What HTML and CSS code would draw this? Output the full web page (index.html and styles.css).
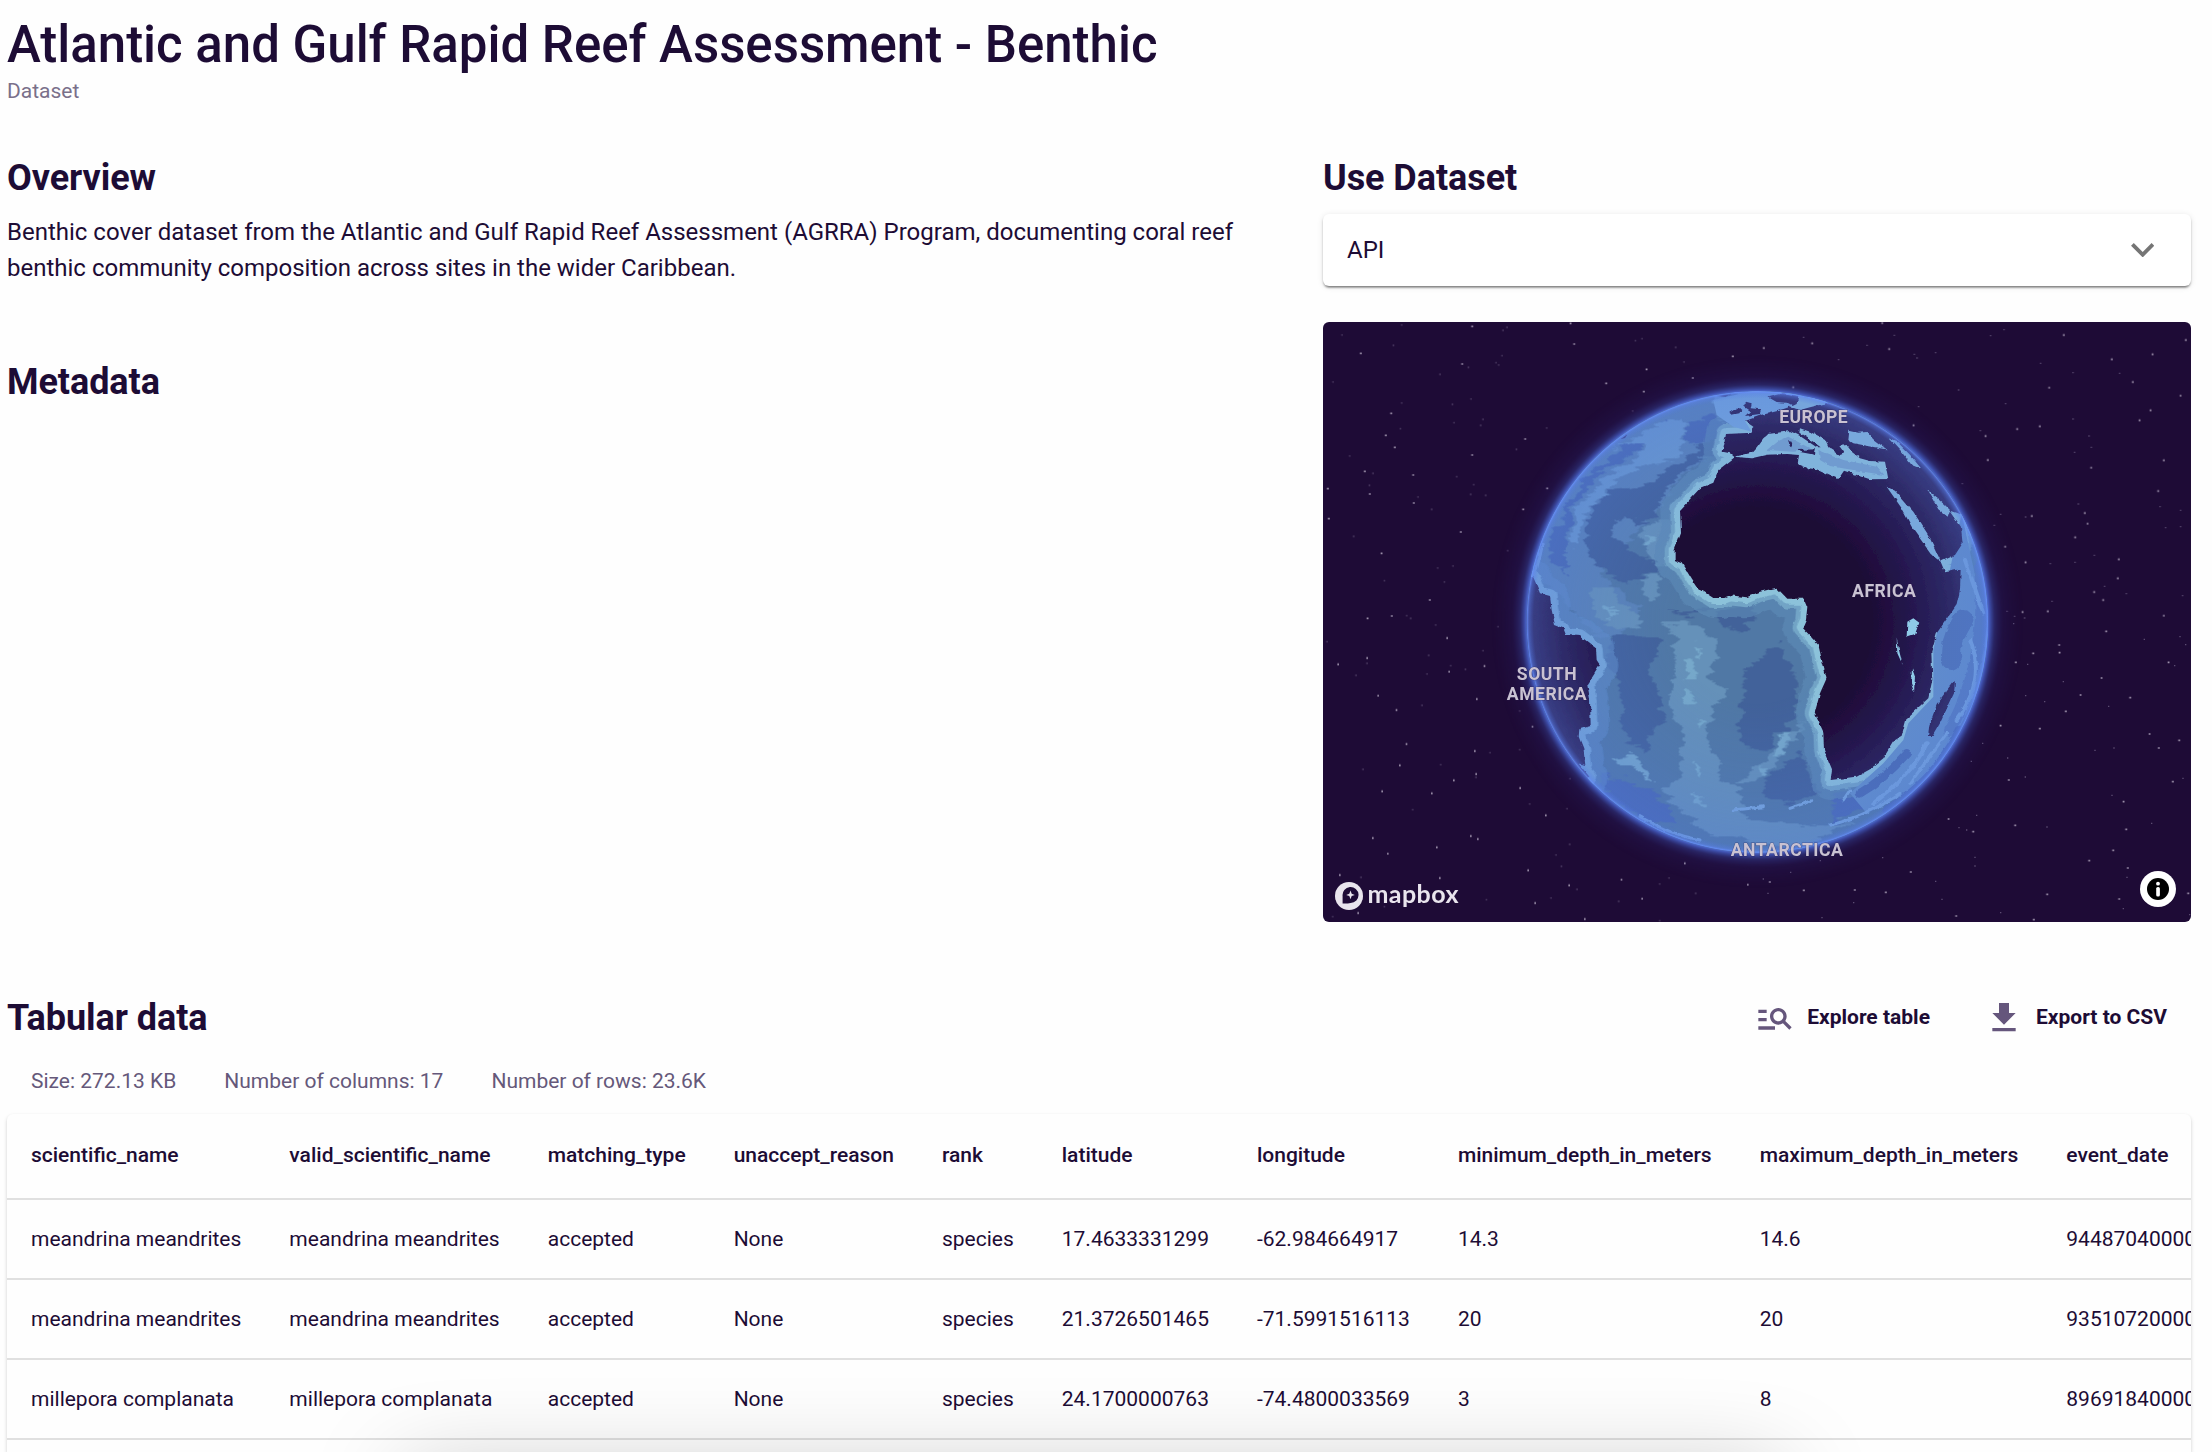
FILE: index.html
```html
<!DOCTYPE html>
<html lang="en">
<head>
<meta charset="utf-8">
<title>Atlantic and Gulf Rapid Reef Assessment - Benthic</title>
<link rel="stylesheet" href="styles.css">
</head>
<body>
<main class="page">
  <header class="page-header">
    <h1 class="title">Atlantic and Gulf Rapid Reef Assessment - Benthic</h1>
    <p class="kind">Dataset</p>
  </header>

  <div class="columns">
    <div class="info">
      <section>
        <h2 class="heading">Overview</h2>
        <p class="overview-text">Benthic cover dataset from the Atlantic and Gulf Rapid Reef Assessment (AGRRA) Program, documenting coral reef benthic community composition across sites in the wider Caribbean.</p>
      </section>
      <section>
        <h2 class="heading">Metadata</h2>
      </section>
    </div>

    <div class="side">
      <section>
        <h2 class="heading">Use Dataset</h2>
        <div class="panel">
          <span>API</span>
          <svg class="chevron" viewBox="6 8.59 12 7.41"><path d="M16.59 8.59 12 13.17 7.41 8.59 6 10l6 6 6-6z"/></svg>
        </div>
      </section>

      <div class="map">
        <svg class="map-canvas" viewBox="0 0 868 600">
          <defs>
            <radialGradient id="glow" gradientUnits="userSpaceOnUse" cx="772" cy="786" r="800">
              <stop offset=".86" stop-color="#5d82f5"/>
              <stop offset=".872" stop-color="#4a68d4" stop-opacity=".75"/>
              <stop offset=".89" stop-color="#3c50b0" stop-opacity=".38"/>
              <stop offset=".92" stop-color="#31318a" stop-opacity=".15"/>
              <stop offset="1" stop-color="#2a1a60" stop-opacity="0"/>
            </radialGradient>
            <radialGradient id="land" gradientUnits="userSpaceOnUse" cx="772" cy="786" r="692">
              <stop offset=".5" stop-color="#1e0b36"/>
              <stop offset=".68" stop-color="#251850"/>
              <stop offset=".85" stop-color="#2e2b69"/>
              <stop offset="1" stop-color="#3a4189"/>
            </radialGradient>
            <radialGradient id="haze" gradientUnits="userSpaceOnUse" cx="772" cy="786" r="692">
              <stop offset=".35" stop-color="#5078e0" stop-opacity="0"/>
              <stop offset=".75" stop-color="#5078e0" stop-opacity=".18"/>
              <stop offset="1" stop-color="#5078e0" stop-opacity=".34"/>
            </radialGradient>
            <radialGradient id="rim" gradientUnits="userSpaceOnUse" cx="772" cy="786" r="692">
              <stop offset=".97" stop-color="#5078e0" stop-opacity="0"/>
              <stop offset=".99" stop-color="#5b80ea" stop-opacity=".4"/>
              <stop offset="1" stop-color="#6a92ff" stop-opacity=".9"/>
            </radialGradient>
            <clipPath id="disc"><circle cx="772" cy="786" r="692"/></clipPath>
            <filter id="ragged" x="-10%" y="-10%" width="120%" height="120%">
              <feTurbulence type="fractalNoise" baseFrequency=".012 .06" numOctaves="3" seed="4"/>
              <feDisplacementMap in="SourceGraphic" scale="50" xChannelSelector="R" yChannelSelector="B"/>
            </filter>
            <filter id="coast" x="-5%" y="-5%" width="110%" height="110%">
              <feTurbulence type="fractalNoise" baseFrequency=".05" numOctaves="2" seed="9"/>
              <feDisplacementMap in="SourceGraphic" scale="12" xChannelSelector="R" yChannelSelector="G"/>
            </filter>
            <path id="continent" d="M704 292 655 330 640 368 600 385 540 450 543 520 524 570 524 600 548 610 575 655 595 685 640 714 670 714 690 706 740 712 780 695 830 683 862 716 912 716 922 740 918 780 908 803 955 855 968 910 980 955 960 1000 944 1060 970 1115 972 1170 996 1228 992 1260 1070 1250 1110 1228 1150 1195 1180 1145 1205 1130 1220 1075 1285 1015 1297 960 1294 875 1310 820 1370 735 1380 690 1382 628 1335 637 1322 605 1365 585 1388 550 1383 500 1350 452 1378 462 1500 480 1500 60 1000 60 985 128 930 138 900 150 870 140 835 152 785 165 735 183 760 200 755 218 678 222 668 275 690 280Z"/>
            <path id="south-america" d="M60 650 100 652 120 700 150 708 155 750 165 795 190 805 198 825 240 828 288 865 290 900 300 915 262 975 270 1020 272 1098 238 1108 236 1130 250 1165 256 1215 235 1210 268 1250 200 1350 0 1200 0 700Z"/>
          </defs>

          <g transform="scale(.333333)" stroke="#d9d0e2" stroke-width="5" fill="none" opacity=".75">
            <path d="M445 13h5M751 66h5M111 94h5M415 126h5M968 142h5M960 209h5M202 274h5M186 340h5M213 376h5M445 399h5M268 459h5M138 516h5M270 543h5M598 562h5M411 630h5M670 499h5M173 694h5M15 590h5M12 500h5M318 834h5M604 351h5M123 448h5M847 184h5M1107 168h5M131 889h5M204 882h5M740 4h5M1227 103h5"/>
            <path transform="translate(1302 0)" d="M373 3h5M394 81h5M163 64h5M18 78h5M918 39h5M1284 54h5M1184 97h5M1062 112h5M1125 180h5M874 197h5M1145 295h5M1178 265h5M778 321h5M846 313h5M690 414h5M683 342h5M1000 437h5M1218 415h5M822 582h5M981 573h5M989 605h5M952 646h5M742 674h5M803 721h5M1083 712h5M1080 769h5M1009 810h5M1036 834h5M870 868h5M794 870h5M106 196h5M1218 881h5M467 310h5M1268 221h5M1201 507h5"/>
            <path transform="translate(0 900)" d="M370 48h5M130 108h5M43 127h5M376 149h5M482 132h5M459 231h5M218 264h5M248 366h5M228 430h5M453 387h5M457 456h5M390 475h5M175 508h5M324 514h5M589 498h5M666 580h5M441 642h5M462 651h5M147 648h5M339 676h5M192 695h5M613 745h5M736 790h5M893 773h5M955 830h5M634 843h5M783 891h5M348 768h5M48 759h5M103 873h5M1083 724h5M1272 788h5M163 221h5M626 314h5"/>
            <path transform="translate(1302 900)" d="M1045 28h5M904 69h5M905 92h5M826 94h5M774 121h5M1031 168h5M968 219h5M1117 227h5M924 268h5M846 320h5M728 311h5M1175 336h5M1203 378h5M1264 355h5M1245 479h5M753 474h5M1097 539h5M572 591h5M646 629h5M772 610h5M1066 685h5M1110 738h5M994 716h5M459 750h5M291 804h5M384 811h5M36 780h5M595 882h5M868 817h5M1084 831h5M138 805h5M1291 814h5M828 893h5M1232 121h5M1105 622h5"/>
          </g>
          <g transform="scale(.333333)" stroke="#9a8fae" stroke-width="4" fill="none" opacity=".5">
            <path d="M234 9h4M538 25h4M550 16h4M535 101h4M349 157h4M517 122h4M525 129h4M434 136h4M209 70h4M386 247h4M442 231h4M234 243h4M391 302h4M478 292h4M471 310h4M230 320h4M78 402h4M148 454h4M137 490h4M578 382h4M669 318h4M450 488h4M441 517h4M486 520h4M283 525h4M399 464h4M324 562h4M90 643h4M342 738h4M388 732h4M362 780h4M182 776h4M249 881h4M261 889h4M935 56h4M955 50h4M1056 76h4M1081 120h4M927 267h4M28 180h4M55 39h4M552 686h4"/>
            <path transform="translate(1302 0)" d="M328 70h4M410 40h4M470 97h4M478 108h4M534 92h4M243 113h4M138 46h4M699 41h4M739 23h4M849 124h4M946 152h4M1086 154h4M603 204h4M744 245h4M483 254h4M946 291h4M994 342h4M668 326h4M951 391h4M1001 376h4M614 485h4M962 546h4M1207 554h4M1269 565h4M1224 617h4M1269 614h4M729 577h4M710 610h4M804 585h4M1010 700h4M952 721h4M878 725h4M1106 815h4M1041 793h4M1275 821h4M748 868h4M771 883h4M801 888h4M883 838h4"/>
            <path transform="translate(0 900)" d="M336 9h4M523 14h4M10 59h4M315 100h4M478 86h4M310 156h4M130 124h4M97 160h4M381 131h4M425 142h4M295 250h4M588 267h4M588 383h4M499 392h4M118 442h4M351 428h4M457 466h4M739 470h4M618 546h4M730 560h4M267 563h4M738 667h4M697 699h4M713 733h4M682 828h4M760 802h4M488 833h4M1008 786h4M1036 768h4M1116 814h4M1008 896h4M885 838h4M112 766h4M182 854h4M27 884h4"/>
            <path transform="translate(1302 900)" d="M768 5h4M1160 52h4M1267 44h4M1284 68h4M1251 131h4M810 127h4M917 179h4M804 221h4M861 239h4M1053 253h4M675 364h4M750 408h4M803 465h4M1069 378h4M1012 385h4M1276 469h4M1182 604h4M657 580h4M604 617h4M627 624h4M868 615h4M652 706h4M652 732h4M375 707h4M99 751h4M534 778h4M188 716h4M288 842h4M193 887h4M1108 766h4M1097 860h4M729 872h4M553 832h4M641 418h4M17 771h4M31 814h4M1063 520h4M1296 878h4"/>
          </g>

          <g transform="translate(177 38) scale(.333333)">
            <circle cx="772" cy="786" r="800" fill="url(#glow)"/>
            <g clip-path="url(#disc)">
              <circle cx="772" cy="786" r="695" fill="#5078a5"/>
              <g filter="url(#ragged)">
                <path fill="#5a83b6" d="M60 500 300 180 660 90 760 200 680 270 560 330 480 440 300 640 420 740 360 830 280 820 170 700 80 640Z"/>
                <path fill="#43629a" d="M640 230 560 290 500 330 430 380 310 400 260 480 258 560 290 625 370 662 440 655 480 640 465 600 410 590 370 540 335 530 345 480 385 470 400 490 455 480 490 400 560 320 660 280Z"/>
                <path fill="#486ab0" d="M150 530 250 360 400 240 500 180 520 210 440 260 300 340 220 440 190 560 200 640 150 600ZM560 190 640 170 700 200 660 240 560 250Z"/>
                <path fill="#43629a" d="M340 825 475 820 480 850 450 930 475 1000 500 1080 450 1120 440 1175 380 1140 350 1100 375 1060 350 960 320 900Z"/>
                <path fill="#43629a" d="M835 850 885 940 890 1060 830 1120 800 1170 740 1165 715 1120 730 1020 730 940 790 890ZM640 765 750 730 765 770 720 820 670 800ZM480 750 560 755 640 750 560 768ZM900 1180 940 1260 950 1300 850 1330 780 1300 820 1240Z"/>
                <path fill="#4a69b2" d="M290 1240 400 1270 500 1330 530 1400 420 1370 330 1310ZM1000 1300 1120 1260 1210 1180 1260 1190 1180 1300 1000 1390Z"/>
                <path fill="#6591b9" d="M270 680 340 680 350 730 430 770 420 800 350 810 285 770ZM430 660 475 650 480 700 450 730 425 690ZM480 790 555 785 600 800 645 850 650 900 625 960 695 990 640 1040 620 1120 655 1200 660 1260 720 1290 730 1370 900 1400 1060 1380 900 1470 620 1420 480 1290 540 1250 550 1100 510 1050 520 900 530 830Z"/>
                <path fill="#6591b9" d="M415 530 440 500 530 470 540 620 470 610ZM920 1080 860 1110 820 1170 740 1250 700 1280 800 1250 880 1140Z"/>
                <path fill="#6b99cc" d="M640 110 760 95 820 150 770 190 660 180 640 150ZM330 270 480 190 540 170 560 210 530 290 450 310 360 350 300 410 250 470 225 560 205 540 230 450 320 350 450 260 400 250Z"/>
                <path fill="#76a8ca" d="M550 900 575 890 590 950 560 960ZM560 980 580 1000 585 1040 560 1030ZM590 1070 610 1080 605 1110ZM585 1200 605 1220 595 1260ZM580 850 600 870 595 890ZM570 1290 620 1330 600 1345ZM310 740 345 750 340 780ZM420 560 440 535 465 545ZM845 1120 870 1115 850 1180 820 1190ZM780 1220 810 1225 800 1250ZM340 1190 400 1180 440 1230 460 1260 410 1230 360 1220Z"/>
              </g>
              <g fill="none" stroke-linejoin="round" filter="url(#coast)">
                <use href="#continent" stroke="#5d8bb5" stroke-width="120" opacity=".65"/>
                <use href="#south-america" stroke="#5f8dc6" stroke-width="110" opacity=".6"/>
                <use href="#south-america" stroke="#78a9d8" stroke-width="40"/>
                <use href="#continent" stroke="#72a4c6" stroke-width="60"/>
                <use href="#continent" stroke="#8cc2da" stroke-width="36"/>
              </g>
              <path fill="#76a8dc" d="M640 120 760 92 900 100 900 150 780 168 735 183 755 215 700 200 650 165Z"/>
              <path fill="#6390c8" d="M1385 460 1300 870 1300 1010 1225 1090 1210 1140 1150 1210 1050 1300 1100 1360 1300 1260 1480 900Z"/>
              <g filter="url(#coast)" fill="none" stroke-linecap="round">
                <path stroke="#4f73b4" stroke-width="60" d="M1390 780Q1345 850 1355 900"/>
                <path stroke="#567cbd" stroke-width="36" d="M1440 620Q1465 900 1350 1110"/>
                <path stroke="#76a5dc" stroke-width="12" d="M1410 840Q1460 960 1370 1080M1395 600Q1430 700 1450 760M1280 1150Q1240 1240 1120 1330"/>
                <path stroke="#4a6bb0" stroke-width="26" d="M1380 1110Q1300 1270 1160 1350M1220 1180Q1150 1260 1080 1300"/>
                <path stroke="#78a7dc" stroke-width="9" d="M1340 1120 1230 1270M990 1395Q1100 1370 1200 1300M1050 1290 1030 1320M870 1345 935 1322M700 1350 790 1340M420 1370Q500 1420 600 1440M130 550 100 660"/>
              </g>
              <circle cx="772" cy="786" r="693" fill="url(#haze)"/>
              <g filter="url(#coast)">
                <use href="#continent" fill="url(#land)"/>
                <use href="#south-america" fill="url(#land)"/>
                <path fill="url(#land)" d="M1365 962 1362 1000 1320 1090 1298 1128 1284 1128 1288 1095 1310 1035 1340 995ZM738 125 755 130 752 145 782 148 780 162 735 168 750 154 730 140ZM688 158 715 142 724 150 718 160 695 164ZM805 112 850 100 895 108 905 125 885 142 860 128 830 126ZM650 108 695 102 680 110ZM358 238 380 222 372 234Z"/>
                <path fill="#76a5dc" d="M895 108 985 128 930 142 900 150 870 142 890 132Z"/>
                <path fill="#80b3dc" d="M704 290 755 278 770 262 790 235 805 222 870 213 900 228 950 262 962 262 940 245 898 218 900 205 930 215 975 240 985 262 1020 285 1034 280 1018 258 1040 255 1055 275 1080 295 1110 303 1155 305 1165 357 1110 358 1032 332 1015 357 950 328 925 325 893 312 897 285 860 282 800 284 755 295Z"/>
                <path fill="#6f9bd0" d="M830 245 865 230 935 268 880 275 800 270ZM955 270 1030 300 1130 320 1150 345 1060 330 990 318 960 300Z"/>
                <path fill="url(#land)" d="M862 240 872 242 875 262 866 258ZM892 270 948 268 944 284 900 276Z"/>
                <path fill="#78a8dc" d="M1048 212 1075 218 1100 216 1120 238 1160 268 1125 262 1060 250 1045 240ZM1168 235 1190 244 1230 284 1265 327 1235 315 1200 270ZM1160 380 1185 392 1240 455 1285 525 1324 607 1295 585 1235 500 1205 445ZM1282 390 1335 435 1350 450 1343 470 1315 448Z"/>
                <path fill="#8fcbe8" d="M1222 785 1240 775 1258 788 1245 822 1220 830ZM1190 835 1197 870 1208 915 1192 880ZM1236 925 1245 950 1242 995 1233 970Z"/>
              </g>
              <circle cx="772" cy="786" r="693" fill="url(#rim)"/>
            </g>
          </g>

          <g class="map-label">
            <text x="490.7" y="100.8">EUROPE</text>
            <text x="561.2" y="274.8">AFRICA</text>
            <text x="224" y="358.3">SOUTH</text>
            <text x="224" y="377.6">AMERICA</text>
            <text x="464" y="534">ANTARCTICA</text>
          </g>

          <circle cx="26" cy="574" r="14" fill="#e9e5ed"/>
          <path fill="#1e0b36" d="M19.6 581.4V574a8 8 0 1 1 8 7Q23.5 581.8 19.6 581.4Z"/>
          <path fill="#e9e5ed" d="m27.5 568.6 1.2 3.1 3.1 1.2-3.1 1.2-1.2 3.1-1.2-3.1-3.1-1.2 3.1-1.2z"/>
          <text class="wordmark" x="44.5" y="580.8" textLength="91">mapbox</text>

          <circle cx="835" cy="567" r="18" fill="#fff"/>
          <circle cx="835" cy="567" r="11" fill="#000"/>
          <circle cx="835" cy="561.7" r="1.9" fill="#fff"/>
          <rect x="833.2" y="565" width="3.7" height="9.5" rx="1.6" fill="#fff"/>
        </svg>
      </div>
    </div>
  </div>

  <section class="tabular">
    <div class="tabular-head">
      <h2 class="heading">Tabular data</h2>
      <div class="actions">
        <a class="action"><svg class="icon" viewBox="0 0 24 24"><path d="M7 9H2V7h5v2zm0 3H2v2h5v-2zm13.59 7l-3.83-3.83c-.8.52-1.74.83-2.76.83-2.76 0-5-2.24-5-5s2.24-5 5-5 5 2.24 5 5c0 1.02-.31 1.96-.83 2.75L22 17.59 20.59 19zM17 11c0-1.65-1.35-3-3-3s-3 1.35-3 3 1.35 3 3 3 3-1.35 3-3zM2 19h10v-2H2v2z"/></svg><span>Explore table</span></a>
        <a class="action"><svg class="icon" viewBox="0 0 24 24"><path d="M19 9h-4V3H9v6H5l7 7 7-7zM5 18v2h14v-2H5z"/></svg><span>Export to CSV</span></a>
      </div>
    </div>
    <div class="stats"><span>Size: 272.13 KB</span><span>Number of columns: 17</span><span>Number of rows: 23.6K</span></div>
    <div class="table-card">
      <table class="table">
        <thead>
          <tr><th>scientific_name</th><th>valid_scientific_name</th><th>matching_type</th><th>unaccept_reason</th><th>rank</th><th>latitude</th><th>longitude</th><th>minimum_depth_in_meters</th><th>maximum_depth_in_meters</th><th>event_date</th></tr>
        </thead>
        <tbody>
          <tr><td>meandrina meandrites</td><td>meandrina meandrites</td><td>accepted</td><td>None</td><td>species</td><td>17.4633331299</td><td>-62.984664917</td><td>14.3</td><td>14.6</td><td>944870400000</td></tr>
          <tr><td>meandrina meandrites</td><td>meandrina meandrites</td><td>accepted</td><td>None</td><td>species</td><td>21.3726501465</td><td>-71.5991516113</td><td>20</td><td>20</td><td>935107200000</td></tr>
          <tr><td>millepora complanata</td><td>millepora complanata</td><td>accepted</td><td>None</td><td>species</td><td>24.1700000763</td><td>-74.4800033569</td><td>3</td><td>8</td><td>896918400000</td></tr>
        </tbody>
      </table>
    </div>
  </section>
  <div class="bottom-shade"></div>
</main>
</body>
</html>
```
FILE: styles.css
```css
* { box-sizing: border-box; }
body {
  margin: 0;
  background: #fefefe;
  color: #1d0c35;
  font: 400 24px/36px Roboto, sans-serif;
}
h1, h2, p { margin: 0; }

.page {
  position: relative;
  display: flex;
  flex-direction: column;
  height: 100vh;
  padding: 15px 21px 0 7px;
  overflow: hidden;
}
.page-header { height: 139px; }
.title { font-size: 51px; line-height: 60px; font-weight: 500; letter-spacing: -.02px; }
.kind { margin-top: 1px; font-size: 21px; line-height: 30px; color: #7a708a; }
.heading { font-size: 36px; line-height: 49px; height: 48px; font-weight: 700; letter-spacing: -.06px; }

.columns { display: grid; grid-template-columns: 1fr 868px; column-gap: 72px; height: 840px; }
.info { display: flex; flex-direction: column; gap: 72px; }
.overview-text { margin-top: 12px; }
.side { display: flex; flex-direction: column; gap: 36px; }

.panel {
  display: flex;
  align-items: center;
  justify-content: space-between;
  height: 72px;
  margin-top: 12px;
  padding: 0 37px 0 24px;
  border-radius: 6px;
  background: #fff;
  box-shadow: 0 4px 2px -3px rgba(0, 0, 0, .3), 0 2px 2px rgba(0, 0, 0, .26), 0 1px 6px rgba(0, 0, 0, .1);
}
.chevron { width: 23.4px; height: 14.4px; fill: #757575; }

.map { height: 600px; border-radius: 6px; overflow: hidden; background: #1e0b36; }
.map-canvas { display: block; width: 868px; height: 600px; }
.map-label text {
  font: 700 17.6px Roboto, sans-serif;
  letter-spacing: .5px;
  text-anchor: middle;
  fill: #c9c2d2;
  stroke: rgba(40, 24, 70, .4);
  stroke-width: 1px;
  paint-order: stroke;
}
.wordmark { font: 700 25px Lato, sans-serif; fill: #e9e5ed; }

.tabular { display: flex; flex-direction: column; flex: 1; min-height: 0; }
.tabular-head { display: flex; justify-content: space-between; height: 48px; }
.actions { display: flex; gap: 54px; padding-right: 24px; }
.action { display: flex; align-items: center; gap: 12px; font-size: 21px; line-height: 30px; font-weight: 700; }
.action span { margin-bottom: 2px; }
.icon { width: 40px; height: 40px; fill: #65567c; }
.stats { display: flex; gap: 48px; margin: 24px 0 18px; padding-left: 24px; font-size: 21px; line-height: 30px; color: #65587a; }

.table-card {
  flex: 1;
  min-height: 0;
  overflow: hidden;
  clip-path: inset(-8px -8px 0 -8px);
  border-radius: 6px 6px 0 0;
  background: #fefefe;
  box-shadow: 0 2px 4px rgba(0, 0, 0, .14), 0 1px 2px rgba(0, 0, 0, .08);
}
.table { border-collapse: separate; border-spacing: 0; font-size: 21px; line-height: 30px; white-space: nowrap; }
.table th, .table td { height: 80px; padding: 0 24px; border-bottom: 2px solid #e0e0e0; text-align: left; font-weight: 400; }
.table th { height: 86px; padding-bottom: 2px; font-weight: 500; }

/* Shadow of the panel docked below the fold */
.bottom-shade {
  position: absolute;
  left: 400px;
  bottom: -66px;
  width: 1384px;
  height: 40px;
  border-radius: 20px;
  box-shadow: 0 0 90px rgba(0, 0, 0, .34);
}
```
